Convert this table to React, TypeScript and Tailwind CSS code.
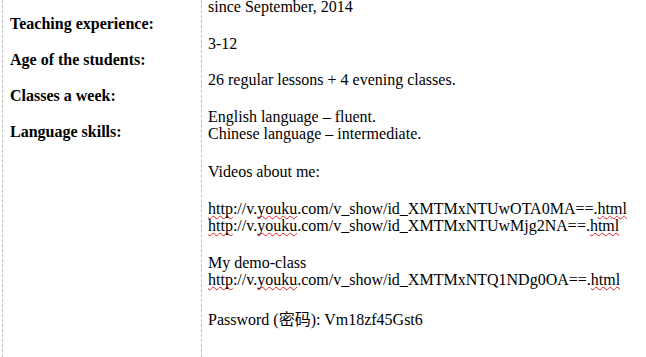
const Spell = ({ children }: { children: React.ReactNode }) => (
    <span className="underline decoration-wavy decoration-[#e02020] decoration-1 underline-offset-1 [text-decoration-skip-ink:none]">{children}</span>
)

const labels = ["Teaching experience:", "Age of the students:", "Classes a week:", "Language skills:"]

export default function App() {
    return (
        <div className="h-[357px] w-[646px] overflow-hidden bg-white text-black text-[16px] leading-[17px] font-['Liberation_Serif','Noto_Sans_CJK_SC',serif]">
            <div className="flex h-full ml-[2px]">

                {/* left column: labels */}
                <div className="w-[200px] shrink-0 h-full border-x border-dashed border-[#bdbdbd] pl-[7px] pt-[15px] flex flex-col gap-[19px] font-bold">
                    {labels.map((label, i) => (
                        <p key={i}>{label}</p>
                    ))}
                </div>

                {/* right column: values */}
                <div className="flex-1 h-full pl-[6px] -mt-[2px]">
                    <p>since September, 2014</p>
                    <p className="mt-[20px]">3-12</p>
                    <p className="mt-[19px]">26 regular lessons + 4 evening classes.</p>

                    <p className="mt-[20px]">English language – fluent.</p>
                    <p>Chinese language – intermediate.</p>

                    <p className="mt-[21px]">Videos about me:</p>

                    <p className="mt-[20px] relative z-10"><Spell>http</Spell>://v.<Spell>youku</Spell>.com/v_show/id_XMTMxNTUwOTA0MA==.<Spell>html</Spell></p>
                    <p><Spell>http</Spell>://v.<Spell>youku</Spell>.com/v_show/id_XMTMxNTUwMjg2NA==.<Spell>html</Spell></p>

                    <p className="mt-[20px]">My demo-class</p>
                    <p><Spell>http</Spell>://v.<Spell>youku</Spell>.com/v_show/id_XMTMxNTQ1NDg0OA==.<Spell>html</Spell></p>

                    <p className="mt-[23px]">Password (密码): Vm18zf45Gst6</p>
                </div>
            </div>
        </div>
    )
}
